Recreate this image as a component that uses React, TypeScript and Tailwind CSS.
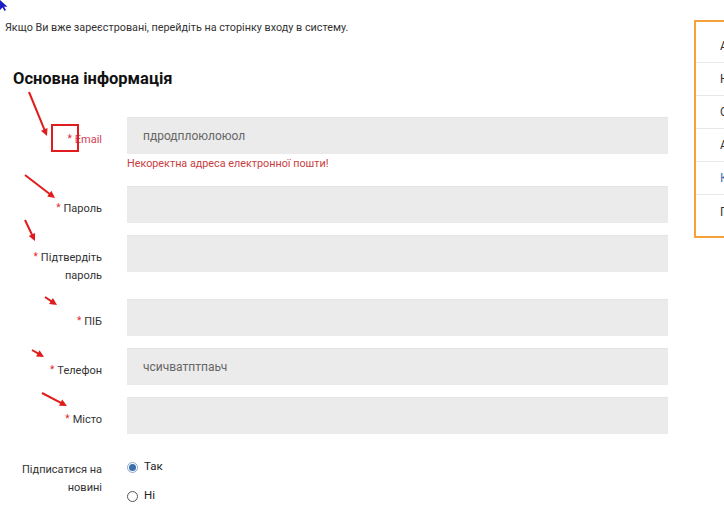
import React from "react";

const font = { fontFamily: "Roboto, 'Noto Sans', Arial, sans-serif" };

function Req() {
  return <span className="text-[#e4252b] mr-[3px] text-[10px] relative top-[-1px]">*</span>;
}

function Field({
  label,
  value,
  error,
  labelClass = "text-[#333]",
  mb = "mb-[12px]",
}: {
  label: React.ReactNode;
  value?: string;
  error?: string;
  labelClass?: string;
  mb?: string;
}) {
  return (
    <div className={`flex ${mb}`}>
      <div className={`w-[102px] shrink-0 text-right pt-[14px] text-[11px] leading-[18px] ${labelClass}`}>
        {label}
      </div>
      <div className="ml-[25px] w-[541px]">
        <div className="h-[37px] bg-[#ebebeb] border-t border-[#e4e4e4] flex items-center pl-[16px] text-[12px] text-[#666]">
          {value}
        </div>
        {error && (
          <div className="mt-[2px] text-[10.8px] leading-[16px] text-[#c9403f]">{error}</div>
        )}
      </div>
    </div>
  );
}

function Radio({ checked, label }: { checked?: boolean; label: string }) {
  return (
    <div className="flex items-center h-[18px]">
      {checked ? (
        <span className="w-[11px] h-[11px] rounded-full border border-[#8fa9c9] bg-white flex items-center justify-center">
          <span className="w-[7px] h-[7px] rounded-full bg-[#3b6fae]" />
        </span>
      ) : (
        <span className="w-[11px] h-[11px] rounded-full border border-[#555] bg-white" />
      )}
      <span className="ml-[6px] text-[11.5px] text-[#222]">{label}</span>
    </div>
  );
}

const menu = [
  { t: "Авторизація", c: "text-[#333]" },
  { t: "Новини", c: "text-[#333]" },
  { t: "Оплата", c: "text-[#333]" },
  { t: "Акції", c: "text-[#333]" },
  { t: "Кошик", c: "text-[#3a6fb0]" },
  { t: "Про нас", c: "text-[#333]" },
];

function Arrow({ x1, y1, x2, y2 }: { x1: number; y1: number; x2: number; y2: number }) {
  const a = Math.atan2(y2 - y1, x2 - x1);
  const L = 8;
  const w = 0.45;
  const p1 = [x2 - L * Math.cos(a - w), y2 - L * Math.sin(a - w)];
  const p2 = [x2 - L * Math.cos(a + w), y2 - L * Math.sin(a + w)];
  return (
    <g>
      <line x1={x1} y1={y1} x2={x2 - 3 * Math.cos(a)} y2={y2 - 3 * Math.sin(a)} stroke="#e01c1c" strokeWidth="2" />
      <polygon points={`${x2},${y2} ${p1[0]},${p1[1]} ${p2[0]},${p2[1]}`} fill="#e01c1c" />
    </g>
  );
}

export default function App() {
  return (
    <div className="relative w-[724px] h-[512px] overflow-hidden bg-white" style={font}>
      <div className="flex">
        <main className="w-[694px] shrink-0 pt-[19px]">
          <p className="pl-[5px] text-[10.8px] leading-[18px] text-[#333]">
            Якщо Ви вже зареєстровані, перейдіть на сторінку входу в систему.
          </p>
          <h2 className="mt-[31px] pl-[13px] text-[16.5px] leading-[22px] font-bold text-[#111]">
            Основна інформація
          </h2>
          <form className="mt-[27px]">
            <Field
              label={
                <>
                  <Req />
                  Email
                </>
              }
              labelClass="text-[#d23f57]"
              value="пдродплоюлоюол"
              error="Некоректна адреса електронної пошти!"
              mb="mb-[14px]"
            />
            <Field label={<><Req />Пароль</>} />
            <Field label={<><Req />Підтвердіть<br />пароль</>} mb="mb-[14px]" />
            <Field label={<><Req />ПІБ</>} />
            <Field label={<><Req />Телефон</>} value="чсичватптпаьч" />
            <Field label={<><Req />Місто</>} mb="mb-[13px]" />
            <div className="flex">
              <div className="w-[102px] shrink-0 text-right pt-[14px] text-[11px] leading-[18px] text-[#333]">
                Підписатися на<br />новині
              </div>
              <div className="ml-[25px] pt-[11px] flex flex-col gap-[11px]">
                <Radio checked label="Так" />
                <Radio label="Ні" />
              </div>
            </div>
          </form>
        </main>
        {/* side menu, only its left edge fits in the window */}
        <aside className="mt-[20px] w-[200px] shrink-0 border-2 border-[#f6a23a] pt-[8px] pb-[8px] self-start">
          {menu.map((m, i) => (
            <div
              key={m.t}
              className={`h-[33px] flex items-center pl-[24px] text-[12px] ${m.c} ${
                i < menu.length - 1 ? "border-b border-[#e8e8e8]" : ""
              }`}
            >
              <span className="block w-[4px] overflow-hidden whitespace-nowrap">{m.t}</span>
            </div>
          ))}
        </aside>
      </div>

      {/* mouse pointer */}
      <svg className="absolute left-0 top-0" width="10" height="12" viewBox="0 0 10 12">
        <polygon points="0,0 0,10 2.5,7.5 4.5,11 6,10 4,6.8 7.5,6.8" fill="#1c1cc8" />
      </svg>

      {/* review annotations */}
      <svg className="absolute left-0 top-0 pointer-events-none" width="724" height="512">
        <rect x="52" y="125" width="26" height="26" fill="none" stroke="#e01c1c" strokeWidth="2" />
        <Arrow x1={29} y1={92} x2={47} y2={136} />
        <Arrow x1={25} y1={175} x2={55} y2={198} />
        <Arrow x1={25} y1={220} x2={35} y2={241} />
        <Arrow x1={45} y1={297} x2={57} y2={305} />
        <Arrow x1={32} y1={350} x2={44} y2={357} />
        <Arrow x1={42} y1={393} x2={67} y2={406} />
      </svg>
    </div>
  );
}
